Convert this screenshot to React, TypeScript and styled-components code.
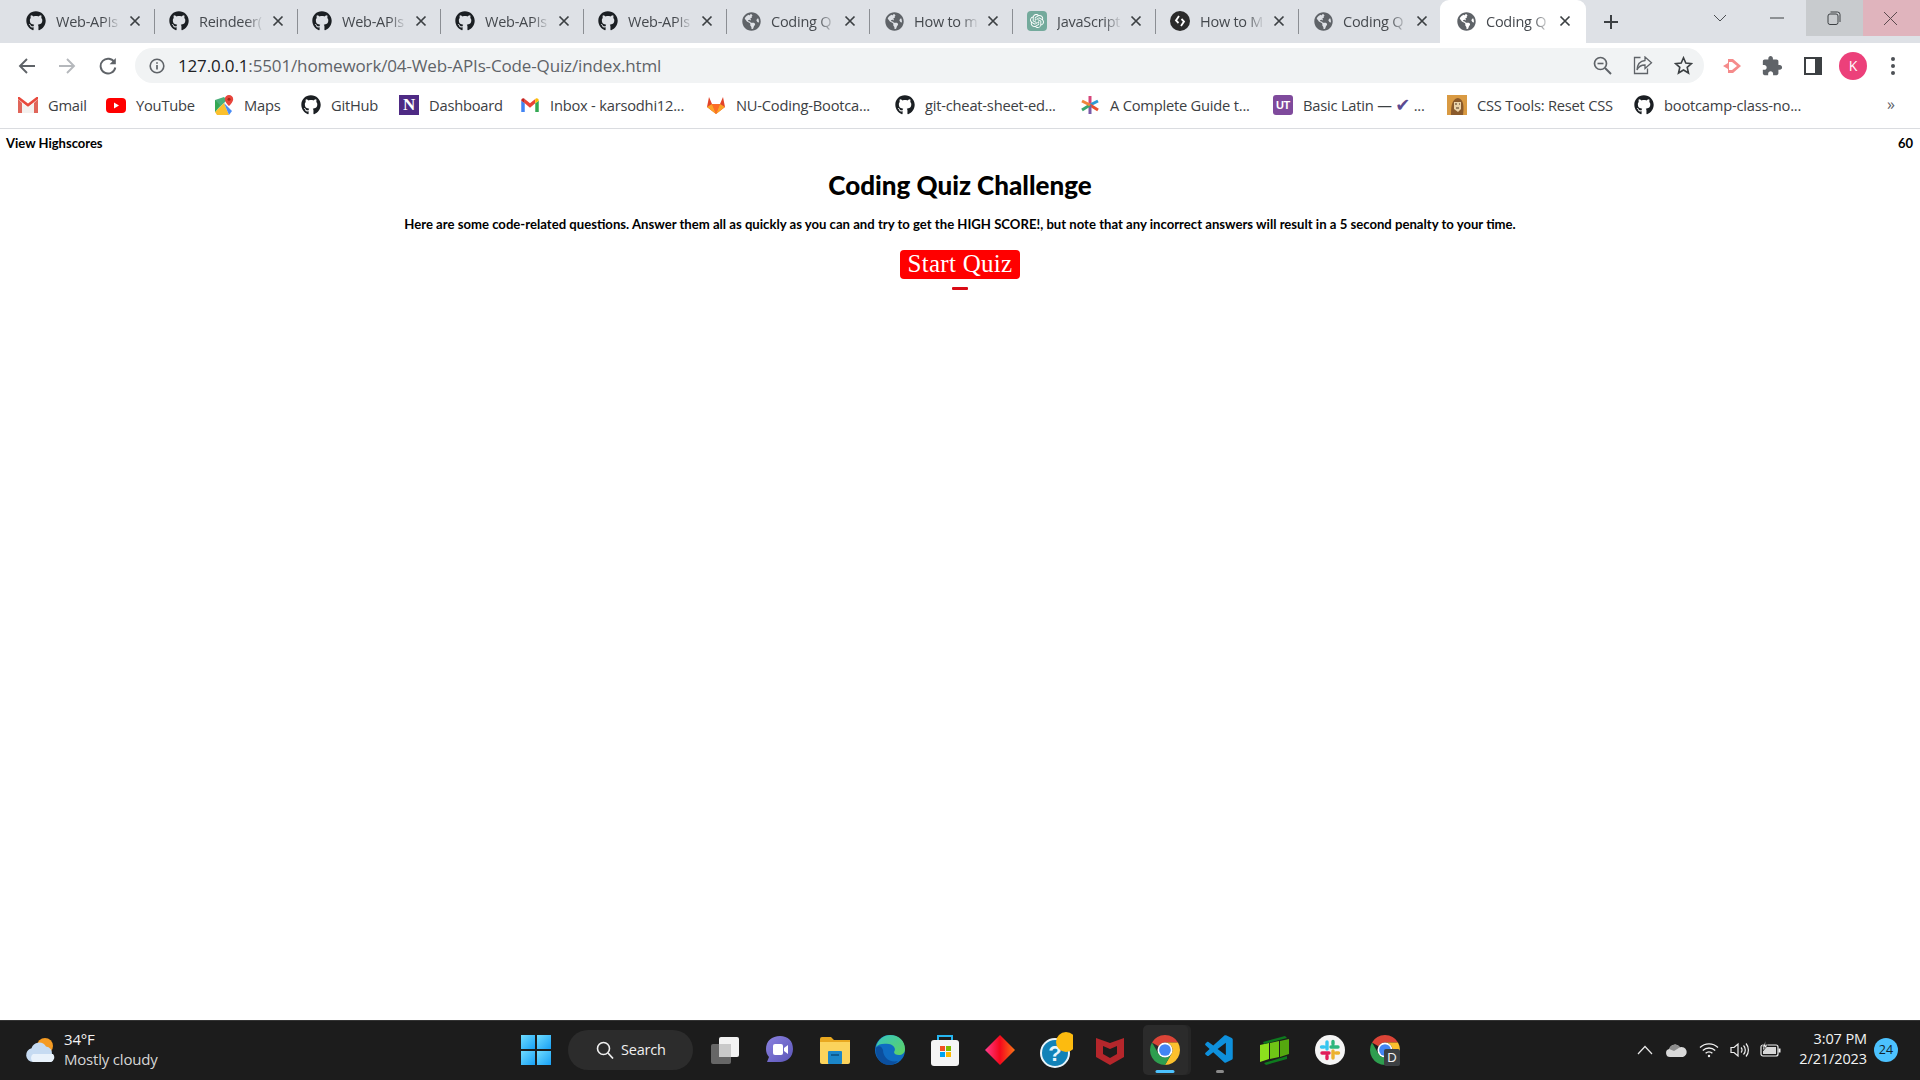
import React from "react";
import styled, { createGlobalStyle } from "styled-components";
import { FaGithub, FaGlobeAmericas } from "react-icons/fa";
import { SiOpenai } from "react-icons/si";
import { VscVscode } from "react-icons/vsc";

const UI = `"Open Sans", "Noto Sans", "Liberation Sans", sans-serif`;
const GOTHIC = `Lato, "Liberation Sans", sans-serif`;

const Global = createGlobalStyle`
  html, body { margin: 0; padding: 0; height: 100%; overflow: hidden; background: #fff; }
  #root { height: 100%; }
`;

const Shell = styled.div`
  width: 1920px; height: 1080px; display: flex; flex-direction: column; font-family: ${UI};
`;

/* ---------- tab strip ---------- */
const TabStrip = styled.div`
  height: 43px; flex: none; background: #dee1e6; display: flex; padding-left: 12px; box-sizing: border-box;
`;
const TabBox = styled.div<{ $active?: boolean; $sep?: boolean }>`
  width: 143px; height: 43px; flex: none; position: relative; display: flex; align-items: center;
  padding: 0 0 1px 14px; box-sizing: border-box; color: #45494e; z-index: ${p => (p.$active ? 1 : 0)};
  &::before {
    content: ""; position: absolute; left: -2px; right: -1px; top: 0; bottom: 0;
    background: ${p => (p.$active ? "#fff" : "transparent")}; border-radius: 9px 9px 0 0; z-index: -1;
  }
  &::after {
    content: ""; position: absolute; right: 0; top: 9px; height: 25px; width: 1px;
    background: ${p => (p.$sep ? "#8b8e93" : "transparent")};
  }
`;
const Favicon = styled.span`
  width: 20px; height: 20px; flex: none; display: flex; align-items: center; justify-content: center;
`;
const TabTitle = styled.span`
  margin-left: 10px; width: 65px; flex: none; overflow: hidden; white-space: nowrap; font-size: 14.5px;
  letter-spacing: -0.25px; -webkit-mask-image: linear-gradient(to right, #000 72%, transparent 100%);
  mask-image: linear-gradient(to right, #000 72%, transparent 100%);
`;
const TabClose = styled.span`
  margin-left: 7px; width: 14px; height: 14px; flex: none; display: flex;
`;
const NewTab = styled.div`
  width: 52px; height: 43px; flex: none; display: flex; align-items: center; justify-content: center;
`;
const WindowControls = styled.div`
  margin-left: auto; display: flex; align-items: flex-start;
`;
const WinButton = styled.div<{ $bg?: string }>`
  width: 57px; height: 36px; padding-right: 2px; box-sizing: border-box; display: flex; align-items: center; justify-content: center;
  background: ${p => p.$bg || "transparent"};
`;

/* ---------- toolbar ---------- */
const Toolbar = styled.div`
  height: 43px; flex: none; background: #fff; display: flex; align-items: flex-start; padding: 5px 8px 0 7px; box-sizing: border-box;
`;
const ToolSlot = styled.div`
  width: 40.3px; height: 35px; flex: none; display: flex; align-items: center; justify-content: center;
`;
const Omnibox = styled.div`
  width: 1569px; height: 35px; margin-left: 7px; margin-right: 8px; flex: none; background: #f1f3f4; border-radius: 18px;
  display: flex; align-items: center; padding: 0 0.5px 0 10px; box-sizing: border-box;
`;
const InfoSlot = styled.div`
  width: 24px; height: 24px; flex: none; display: flex; align-items: center; justify-content: center;
`;
const UrlText = styled.div`
  margin-left: 9px; font-size: 17px; letter-spacing: -0.14px; color: #5f6368; white-space: nowrap; flex: 1;
  b { font-weight: 400; color: #202124; }
`;
const Avatar = styled.div`
  width: 28px; height: 28px; border-radius: 50%; background: #ec407a; color: #fff; font-size: 14px;
  display: flex; align-items: center; justify-content: center;
`;

/* ---------- bookmarks ---------- */
const BookmarkBar = styled.div`
  height: 43px; flex: none; background: #fff; border-bottom: 1px solid #dadce0; box-sizing: border-box;
  display: flex; align-items: center; padding: 0 0 4px 18px; position: relative;
`;
const Bookmark = styled.div<{ $w: number }>`
  width: ${p => p.$w}px; flex: none; display: flex; align-items: center; gap: 10px;
  font-size: 14.7px; letter-spacing: -0.22px; color: #3c4043; white-space: nowrap;
`;
const BmIcon = styled.span`
  width: 20px; height: 20px; flex: none; display: flex; align-items: center; justify-content: center;
`;
const Check = styled.span`
  color: #5b4a91; font-family: "DejaVu Sans", sans-serif; font-size: 18px; line-height: 16px;
`;
const More = styled.div`
  margin-left: auto; margin-right: 25px; font-size: 16px; color: #5f6368; line-height: 1; padding-bottom: 3px;
`;
const NBadge = styled.span`
  width: 20px; height: 20px; background: #4e2a84; color: #fff; font: 700 17px "Liberation Serif", serif;
  display: flex; align-items: center; justify-content: center;
`;
const UTBadge = styled.span`
  width: 20px; height: 20px; border-radius: 3px; background: #7f4a9c; color: #fff; font: 700 11px "Liberation Sans", sans-serif;
  display: flex; align-items: center; justify-content: center;
`;

/* ---------- page ---------- */
const Page = styled.main`
  flex: 1; background: #fff; font-family: ${GOTHIC}; color: #000; min-height: 0;
`;
const TopRow = styled.header`
  display: flex; justify-content: space-between; padding: 6px 7px 0 6px; font-size: 13px; font-weight: 700; line-height: 16px;
`;
const Intro = styled.section`
  display: flex; flex-direction: column; align-items: center;
`;
const Title = styled.h1`
  margin: 16px 0 0; font-size: 26px; line-height: 36px; font-weight: 900; letter-spacing: 0;
`;
const Lead = styled.p`
  margin: 12px 0 0; font-size: 13.14px; line-height: 18px; font-weight: 700; letter-spacing: 0;
`;
const StartButton = styled.button`
  margin-top: 17px; width: 120px; height: 29px; padding: 0 0 2px; border: 0; border-radius: 4px; background: #f00; color: #fff;
  font: 400 25px/27px "Liberation Serif", serif; letter-spacing: 0.3px;
`;
const Dash = styled.div`
  margin-top: 8px; width: 16px; height: 3px; border-radius: 1px; background: #d90a14;
`;

/* ---------- taskbar ---------- */
const Taskbar = styled.footer`
  height: 60px; flex: none; background: #1c1c1c; border-top: 1px solid #333; box-sizing: border-box;
  display: flex; align-items: center; color: #fff; padding-bottom: 2px;
`;
const Weather = styled.div`
  width: 521px; flex: none; display: flex; align-items: center; padding-left: 25px; box-sizing: border-box; gap: 7px;
`;
const WeatherText = styled.div`
  font-size: 15px; line-height: 20px; letter-spacing: -0.2px; color: #f3f3f3; padding-bottom: 2px;
  span { display: block; color: #d6d6d6; }
`;
const StartIcon = styled.div`
  width: 30px; height: 30px; flex: none; display: grid; grid-template-columns: 1fr 1fr; gap: 2px;
`;
const Pane = styled.span`
  background: linear-gradient(135deg, #6fdcff, #18a0f5);
`;
const SearchPill = styled.div`
  width: 125px; height: 40px; margin-left: 17px; flex: none; border-radius: 20px; background: #2c2c2c;
  display: flex; align-items: center; padding-left: 28px; box-sizing: border-box; gap: 7px; font-size: 14.5px; color: #f0f0f0; letter-spacing: -0.2px;
`;
const TaskIcons = styled.div`
  display: flex; margin-left: 4.5px;
`;
const TaskSlot = styled.div<{ $active?: boolean }>`
  width: 55px; height: 50px; flex: none; display: flex; align-items: center; justify-content: center; position: relative;
  &::before {
    content: ""; position: absolute; left: 5px; right: 5px; top: 0; bottom: 0; border-radius: 5px;
    background: ${p => (p.$active ? "#2b2b2b" : "transparent")};
    box-shadow: ${p => (p.$active ? "3px 0 0 #262626" : "none")};
  }
  svg { position: relative; }
`;
const Indicator = styled.span<{ $wide?: boolean }>`
  position: absolute; bottom: 2px; left: 50%; transform: translateX(-50%); height: 3px; border-radius: 2px;
  width: ${p => (p.$wide ? 19 : 8)}px; background: ${p => (p.$wide ? "#4cc2ff" : "#8a8a8a")};
`;
const Tray = styled.div`
  margin-left: auto; display: flex; align-items: center; padding-right: 22px;
`;
const TraySlot = styled.div<{ $w: number }>`
  width: ${p => p.$w}px; height: 30px; display: flex; align-items: center; justify-content: center;
`;
const Clock = styled.div`
  width: 82px; text-align: right; font-size: 14.5px; line-height: 20px; color: #f3f3f3; letter-spacing: -0.1px; padding-bottom: 2px;
`;
const Badge = styled.div`
  width: 24px; height: 24px; margin-left: 7px; border-radius: 50%; background: #4cc2ff; color: #10222c; font-size: 12.5px;
  display: flex; align-items: center; justify-content: center;
`;

/* ---------- drawn icons ---------- */
const Close = () => (
  <svg width="14" height="14" viewBox="0 0 14 14"><path d="M2.5 2.5l9 9M11.5 2.5l-9 9" stroke="#3c4043" strokeWidth="1.7" /></svg>
);
const Globe = () => <FaGlobeAmericas size={19} color="#5f6368" />;
const Hub = ({ s = 20 }: { s?: number }) => <FaGithub size={s} color="#1b1f23" />;
const ChatGpt = () => (
  <svg width="20" height="20" viewBox="0 0 20 20"><rect width="20" height="20" rx="4" fill="#74aa9c" /><g transform="translate(3 3) scale(.583)"><SiOpenai size={24} color="#fff" /></g></svg>
);
const Sitepoint = () => (
  <svg width="20" height="20" viewBox="0 0 20 20"><circle cx="10" cy="10" r="10" fill="#2b2b2b" /><path d="M9 5L6 9.5l2.5 2.5M11 15l3-4.5L11.5 8" fill="none" stroke="#fff" strokeWidth="1.8" /></svg>
);
const GmailFlat = () => (
  <svg width="20" height="16" viewBox="0 0 20 16"><path d="M0 2v14h4V6z" fill="#e0665a" /><path d="M20 2v14h-4V6z" fill="#e0665a" /><path d="M0 2V0h1.5L10 6.5 18.5 0H20v2l-10 8z" fill="#e8493c" /><path d="M4 6l6 4 6-4v10H4z" fill="#f3f1ef" /></svg>
);
const GmailColor = () => (
  <svg width="18" height="14" viewBox="0 0 20 16"><path d="M0 3v13h4V6z" fill="#4285f4" /><path d="M20 3v13h-4V6z" fill="#34a853" /><path d="M4 6V1L10 6 16 1v5l-6 5z" fill="#ea4335" /><path d="M0 3c0-3 3-3.500 4-2v5z" fill="#c5221f" /><path d="M20 3c0-3-3-3.500-4-2v5z" fill="#fbbc04" /></svg>
);
const YouTube = () => (
  <svg width="20" height="15" viewBox="0 0 20 15"><rect width="20" height="15" rx="4" fill="#f00" /><path d="M8 4.500v6l5-3z" fill="#fff" /></svg>
);
const Maps = () => (
  <svg width="20" height="20" viewBox="0 0 20 20"><path d="M1 5l9-3 3 3-12 12z" fill="#4caf7a" /><path d="M1 17L10 8l5 12H3z" fill="#fbc02d" /><path d="M10 8l8 8-3 4z" fill="#4a8df6" /><path d="M1 5l5 5-5 7z" fill="#34a853" /><path d="M15 0a4.200 4.200 0 0 0-4.200 4.200C10.800 7 15 11 15 11s4.200-4 4.200-6.800A4.200 4.200 0 0 0 15 0z" fill="#e8453c" /><circle cx="15" cy="4.200" r="1.500" fill="#a52714" /></svg>
);
const GitLab = () => (
  <svg width="20" height="20" viewBox="0 0 20 20"><path d="M10 19L1 12 3 2l3 7h8l3-7 2 10z" fill="#e24329" /><path d="M10 19L6 9h8z" fill="#fc6d26" /><path d="M1 12l9 7-4-10z" fill="#fca326" /><path d="M19 12l-9 7 4-10z" fill="#fca326" /></svg>
);
const Star = () => (
  <svg width="20" height="20" viewBox="0 0 20 20" strokeWidth="3" strokeLinecap="butt"><path d="M10 1v9" stroke="#d6457a" /><path d="M10 10l8-4" stroke="#2b9bd6" /><path d="M10 10l8 5" stroke="#e8502f" /><path d="M10 10v9" stroke="#7a5ba8" /><path d="M10 10l-8 5" stroke="#3aa66d" /><path d="M10 10L2 6" stroke="#f0853a" /></svg>
);
const Portrait = () => (
  <svg width="20" height="20" viewBox="0 0 20 20"><rect width="20" height="20" fill="#d99a42" /><path d="M4 20c0-10 1-16 7-17 6 1 6 9 5 17z" fill="#8a5a2b" /><path d="M7 7h7v7l-3 3-4-3z" fill="#e9d2a9" /><path d="M8 9h2M12 9h1M9 13h3" stroke="#4b3320" strokeWidth="1" /></svg>
);
const Back = ({ c = "#5f6368" }: { c?: string }) => (
  <svg width="18" height="18" viewBox="0 0 18 18"><path d="M17 9H2.500M9 2L2 9l7 7" fill="none" stroke={c} strokeWidth="1.900" /></svg>
);
const Forward = () => (
  <svg width="18" height="18" viewBox="0 0 18 18"><path d="M1 9h14.500M9 2l7 7-7 7" fill="none" stroke="#b5b8bc" strokeWidth="1.900" /></svg>
);
const Reload = () => (
  <svg width="18" height="18" viewBox="0 0 18 18"><path d="M15.500 5.500A7.400 7.400 0 1 0 16.300 10.500" fill="none" stroke="#5f6368" strokeWidth="1.900" /><path d="M16.800 1v6.200h-6.200z" fill="#5f6368" /></svg>
);
const Info = () => (
  <svg width="16" height="16" viewBox="0 0 16 16"><circle cx="8" cy="8" r="6.800" fill="none" stroke="#5f6368" strokeWidth="1.600" /><path d="M8 7v4.500M8 4.200v1.600" stroke="#5f6368" strokeWidth="1.700" /></svg>
);
const ZoomOut = () => (
  <svg width="19" height="19" viewBox="0 0 19 19"><circle cx="7.500" cy="7.500" r="6" fill="none" stroke="#5f6368" strokeWidth="1.700" /><path d="M12 12l6 6" stroke="#5f6368" strokeWidth="1.900" /><path d="M4.500 7.500h6" stroke="#5f6368" strokeWidth="1.600" /></svg>
);
const Share = () => (
  <svg width="20" height="19" viewBox="0 0 20 19" fill="none" stroke="#5f6368" strokeWidth="1.300"><path d="M7.500 1.500H1.500v16h13v-5" /><path d="M12 1l6.500 5.800L12 12.500V9C8 9 5.500 10.500 4 14c.300-5.500 3.500-9 8-9.500z" /></svg>
);
const StarOutline = () => (
  <svg width="19" height="19" viewBox="0 0 19 19"><path d="M9.500 1.800l2.300 5.300 5.700.5-4.300 3.800 1.300 5.600-5-3-5 3 1.300-5.600-4.300-3.800 5.700-.5z" fill="none" stroke="#3c4043" strokeWidth="1.600" /></svg>
);
const Screencast = () => (
  <svg width="20" height="20" viewBox="0 0 20 20"><path d="M1 10l5-3V3h5l8 7-8 7H6v-4z" fill="#f58b8b" /><path d="M7 6h3l5 4-5 4H7z" fill="#fff" /></svg>
);
const Puzzle = () => (
  <svg width="22" height="22" viewBox="0 0 24 24" fill="#5f6368"><path d="M20.500 11H19V7c0-1.100-.9-2-2-2h-4V3.500C13 2.120 11.880 1 10.500 1S8 2.120 8 3.500V5H4c-1.100 0-1.990.9-1.990 2v3.800H3.500c1.490 0 2.700 1.210 2.700 2.700s-1.210 2.700-2.700 2.700H2V20c0 1.100.9 2 2 2h3.800v-1.500c0-1.490 1.210-2.700 2.700-2.700 1.490 0 2.700 1.210 2.700 2.700V22H17c1.100 0 2-.9 2-2v-4h1.500c1.380 0 2.500-1.120 2.500-2.500S21.880 11 20.500 11z" /></svg>
);
const SidePanel = () => (
  <svg width="18" height="18" viewBox="0 0 18 18"><rect x="1" y="1" width="16" height="16" fill="none" stroke="#3c4043" strokeWidth="2" /><rect x="11" y="1" width="6" height="16" fill="#3c4043" /></svg>
);
const Kebab = () => (
  <svg width="6" height="20" viewBox="0 0 6 20" fill="#4d5156"><circle cx="3" cy="3" r="2" /><circle cx="3" cy="10" r="2" /><circle cx="3" cy="17" r="2" /></svg>
);
const Plus = () => (
  <svg width="16" height="16" viewBox="0 0 16 16"><path d="M8 1v14M1 8h14" stroke="#3c4043" strokeWidth="2" /></svg>
);
const Chevron = () => (
  <svg width="14" height="10" viewBox="0 0 14 10"><path d="M1 2l6 6 6-6" fill="none" stroke="#4a4d51" strokeWidth="1" /></svg>
);
const Minimize = () => (
  <svg width="14" height="4" viewBox="0 0 14 4"><path d="M0 2h14" stroke="#3c4043" strokeWidth="1" /></svg>
);
const Restore = () => (
  <svg width="14" height="14" viewBox="0 0 14 14" fill="none" stroke="#3c4043" strokeWidth="1"><rect x="1" y="3" width="10" height="10.500" rx="2" /><path d="M3.500 1h7a2.500 2.500 0 0 1 2.500 2.500V11" /></svg>
);
const WinClose = () => (
  <svg width="15" height="15" viewBox="0 0 15 15"><path d="M1 1l13 13M14 1L1 14" stroke="#5b4a4e" strokeWidth="1" /></svg>
);
const WeatherIcon = () => (
  <svg width="32" height="26" viewBox="0 0 32 26"><circle cx="20" cy="9" r="8" fill="#f59b23" /><path d="M8 25a7 7 0 0 1-1.500-13.800A8 8 0 0 1 21 9.500a6.500 6.500 0 0 1 6 7.500 5 5 0 0 1-1 8z" fill="#c6dbf2" /><path d="M8 25a5 5 0 0 1 0-8h20a5 5 0 0 1-2 8z" fill="#e9f2fb" /></svg>
);
const Magnifier = () => (
  <svg width="18" height="18" viewBox="0 0 18 18"><circle cx="7.500" cy="7.500" r="6" fill="none" stroke="#f0f0f0" strokeWidth="1.600" /><path d="M12 12l5 5.500" stroke="#f0f0f0" strokeWidth="1.700" /></svg>
);
const TaskView = () => (
  <svg width="30" height="28" viewBox="0 0 30 28"><rect x="9" y="1" width="20" height="20" rx="2" fill="#f2f2f2" /><rect x="1" y="8" width="20" height="20" rx="2" fill="#666" /><rect x="9" y="8" width="12" height="13" fill="#c9c9c9" /></svg>
);
const TeamsChat = () => (
  <svg width="30" height="30" viewBox="0 0 30 30"><defs><linearGradient id="tc" x1="0" y1="0" x2="1" y2="1"><stop offset="0" stopColor="#8b82e0" /><stop offset="1" stopColor="#5b55b8" /></linearGradient></defs><path d="M15 1c8 0 13 5 13 13s-6 13-13 13H2l2-5c-2-2-3-5-3-8C1 6 7 1 15 1z" fill="url(#tc)" /><rect x="8" y="9" width="10" height="11" rx="2" fill="#fff" /><path d="M19 13l4-3v9l-4-3z" fill="#fff" /></svg>
);
const Folder = () => (
  <svg width="30" height="28" viewBox="0 0 30 28"><path d="M0 3a2 2 0 0 1 2-2h9l3 3h16v4H0z" fill="#e9a820" /><path d="M0 6h30v20a2 2 0 0 1-2 2H2a2 2 0 0 1-2-2z" fill="#fbd35c" /><rect x="8" y="15" width="14" height="13" rx="1" fill="#1b86c9" /><rect x="11" y="18" width="8" height="2" fill="#0d5c92" /></svg>
);
const Edge = () => (
  <svg width="30" height="30" viewBox="0 0 30 30"><defs><linearGradient id="eg" x1="0" y1="0" x2="1" y2="1"><stop offset="0" stopColor="#36c6c0" /><stop offset="1" stopColor="#5fd25f" /></linearGradient></defs><circle cx="15" cy="15" r="15" fill="#0f6cc2" /><path d="M1 12C3 4 9 0 15 0c9 0 15 6 15 14 0 4-3 6-6 6-3 0-5-1-5-3 2-2 1-7-5-8C8 8 3 9 1 12z" fill="url(#eg)" /><path d="M8 15c0 7 6 13 15 11-3 3-6 4-9 4C6 30 0 23 1 13c2-2 5-3 7 2z" fill="#0b4f9e" /></svg>
);
const Store = () => (
  <svg width="28" height="32" viewBox="0 0 28 32"><path d="M7 6V2h14v4" fill="none" stroke="#26b6f0" strokeWidth="2" /><rect x="0" y="6" width="28" height="26" rx="3" fill="#f5f5f5" /><rect x="9" y="12" width="5" height="5" fill="#f25022" /><rect x="15" y="12" width="5" height="5" fill="#7fba00" /><rect x="9" y="18" width="5" height="5" fill="#00a4ef" /><rect x="15" y="18" width="5" height="5" fill="#ffb900" /></svg>
);
const Diamond = () => (
  <svg width="30" height="30" viewBox="0 0 30 30"><defs><linearGradient id="dm" x1="0" y1="0" x2="1" y2="0"><stop offset="0" stopColor="#ff3c8e" /><stop offset=".5" stopColor="#f5081c" /><stop offset="1" stopColor="#f97316" /></linearGradient></defs><path d="M15 0l15 15-15 15L0 15z" fill="url(#dm)" /></svg>
);
const Help = () => (
  <svg width="36" height="36" viewBox="-3 0 36 36"><circle cx="15" cy="21" r="14" fill="#1182b8" stroke="#e8f4fa" strokeWidth="2" /><text x="15" y="29" textAnchor="middle" fontSize="22" fontWeight="700" fontFamily="Liberation Sans" fill="#e8f4fa">?</text><circle cx="26" cy="10" r="10" fill="#fdbb0f" /></svg>
);
const McAfee = () => (
  <svg width="28" height="30" viewBox="0 0 28 30"><path d="M0 3l14 5 14-5v19l-14 8-14-8z" fill="#b5262b" /><path d="M7 11l7 3 7-3v8l-7 4-7-4z" fill="#1c1c1c" /></svg>
);
const Chrome = ({ s = 30 }: { s?: number }) => (
  <svg width={s} height={s} viewBox="4 4 40 40"><path d="M24 4A20 20 0 0 1 41.320 14H24A10 10 0 0 0 15.340 19L6.680 14A20 20 0 0 1 24 4Z" fill="#db4437" /><path d="M41.320 14A20 20 0 0 1 24 44L32.660 29A10 10 0 0 0 24 14Z" fill="#fbc02d" /><path d="M24 44A20 20 0 0 1 6.680 14L15.340 29A10 10 0 0 0 32.660 29Z" fill="#2e9e4f" /><circle cx="24" cy="24" r="10" fill="#fff" /><circle cx="24" cy="24" r="7.800" fill="#4285f4" /></svg>
);
const GreenBars = () => (
  <svg width="30" height="30" viewBox="0 0 30 30"><path d="M0 10l9-2v16l-9 3z" fill="#8ce01d" /><path d="M10 8l9-2v16l-9 2z" fill="#6fc516" /><path d="M20 6l9-2v15l-9 3z" fill="#55a80f" /><path d="M3 7l22-6 2 2-23 6zM4 28l23-7v3L6 30z" fill="#0e7a1e" /></svg>
);
const Slack = () => (
  <svg width="30" height="30" viewBox="0 0 30 30"><circle cx="15" cy="15" r="15" fill="#f5f5f5" /><g strokeWidth="3.400" strokeLinecap="round" fill="none"><path d="M12 7v7M6.500 12H9" stroke="#36c5f0" /><path d="M7 18h7M12 23.500V21" stroke="#e01e5a" /><path d="M18 23v-7M23.500 18H21" stroke="#ecb22e" /><path d="M23 12h-7M18 6.500V9" stroke="#2eb67d" /></g></svg>
);
const ChromeDev = () => (
  <svg width="30" height="32" viewBox="0 0 30 32"><g transform="translate(0 1)"><Chrome s={30} /></g><rect x="14" y="15" width="16" height="17" rx="2" fill="#3c4043" /><text x="22" y="28" textAnchor="middle" fontSize="13" fontFamily="Liberation Sans" fill="#f1f1f1">D</text></svg>
);
const Caret = () => (
  <svg width="16" height="10" viewBox="0 0 16 10"><path d="M1 9l7-7.500L15 9" fill="none" stroke="#e8e8e8" strokeWidth="1.200" /></svg>
);
const OneDrive = () => (
  <svg width="21" height="14" viewBox="0 0 21 14"><path d="M4 14a4 4 0 0 1-.8-7.900A6 6 0 0 1 14 4.200 4.800 4.800 0 0 1 17 14z" fill="#d9d9d9" /><path d="M3.200 6.100A6 6 0 0 1 14 4.200L8 8z" fill="#8e8e8e" /></svg>
);
const Wifi = () => (
  <svg width="20" height="16" viewBox="0 0 20 16" fill="none" stroke="#f0f0f0" strokeWidth="1.300"><path d="M1 5.500a13 13 0 0 1 18 0M3.800 8.500a9 9 0 0 1 12.400 0M6.600 11.300a5 5 0 0 1 6.800 0" /><circle cx="10" cy="14" r="1.200" fill="#f0f0f0" stroke="none" /></svg>
);
const Speaker = () => (
  <svg width="21" height="16" viewBox="0 0 21 16" fill="none" stroke="#f0f0f0" strokeWidth="1.200"><path d="M1 5.500h3l4-3.500v12l-4-3.500H1z" /><path d="M11 5.500a3.500 3.500 0 0 1 0 5M13.500 3.500a6.500 6.500 0 0 1 0 9M16 1.500a10 10 0 0 1 0 13" /></svg>
);
const Battery = () => (
  <svg width="21" height="17" viewBox="0 0 21 17"><rect x="1" y="4" width="17" height="11" rx="2" fill="none" stroke="#f0f0f0" strokeWidth="1.200" /><rect x="3" y="6" width="13" height="7" fill="#d8d8d8" /><rect x="18.500" y="7.500" width="2" height="4" fill="#f0f0f0" /><path d="M6 0L2 6h3L3 10l5-6H5z" fill="#f0f0f0" stroke="#1c1c1c" strokeWidth=".6" /></svg>
);

/* ---------- data ---------- */
type TabData = { title: string; icon: React.ReactNode };
const tabs: TabData[] = [
  { title: "Web-APIs", icon: <Hub /> },
  { title: "Reindeer(", icon: <Hub /> },
  { title: "Web-APIs", icon: <Hub /> },
  { title: "Web-APIs", icon: <Hub /> },
  { title: "Web-APIs", icon: <Hub /> },
  { title: "Coding Q", icon: <Globe /> },
  { title: "How to m", icon: <Globe /> },
  { title: "JavaScript", icon: <ChatGpt /> },
  { title: "How to M", icon: <Sitepoint /> },
  { title: "Coding Q", icon: <Globe /> },
  { title: "Coding Q", icon: <Globe /> },
];

const bookmarks: { w: number; icon: React.ReactNode; label: React.ReactNode }[] = [
  { w: 88, icon: <GmailFlat />, label: "Gmail" },
  { w: 108, icon: <YouTube />, label: "YouTube" },
  { w: 87, icon: <Maps />, label: "Maps" },
  { w: 98, icon: <Hub />, label: "GitHub" },
  { w: 121, icon: <NBadge>N</NBadge>, label: "Dashboard" },
  { w: 186, icon: <GmailColor />, label: "Inbox - karsodhi12..." },
  { w: 189, icon: <GitLab />, label: "NU-Coding-Bootca..." },
  { w: 185, icon: <Hub />, label: "git-cheat-sheet-ed..." },
  { w: 193, icon: <Star />, label: "A Complete Guide t..." },
  { w: 174, icon: <UTBadge>UT</UTBadge>, label: <>Basic Latin — <Check>✔</Check> ...</> },
  { w: 187, icon: <Portrait />, label: "CSS Tools: Reset CSS" },
  { w: 180, icon: <Hub />, label: "bootcamp-class-no..." },
];

const taskIcons: { node: React.ReactNode; active?: boolean; dot?: "wide" | "small" }[] = [
  { node: <TaskView /> },
  { node: <TeamsChat /> },
  { node: <Folder /> },
  { node: <Edge /> },
  { node: <Store /> },
  { node: <Diamond /> },
  { node: <Help /> },
  { node: <McAfee /> },
  { node: <Chrome />, active: true, dot: "wide" },
  { node: <VscVscode size={34} color="#0e90dc" />, dot: "small" },
  { node: <GreenBars /> },
  { node: <Slack /> },
  { node: <ChromeDev /> },
];

export default function App() {
  return (
    <Shell>
      <Global />
      <TabStrip>
        {tabs.map((t, i) => (
          <TabBox key={i} $active={i === 10} $sep={i < 9}>
            <Favicon>{t.icon}</Favicon>
            <TabTitle>{t.title}</TabTitle>
            <TabClose><Close /></TabClose>
          </TabBox>
        ))}
        <NewTab><Plus /></NewTab>
        <WindowControls>
          <WinButton><Chevron /></WinButton>
          <WinButton><Minimize /></WinButton>
          <WinButton $bg="#c8cbce"><Restore /></WinButton>
          <WinButton $bg="#e0b4bd"><WinClose /></WinButton>
        </WindowControls>
      </TabStrip>

      <Toolbar>
        <ToolSlot><Back /></ToolSlot>
        <ToolSlot><Forward /></ToolSlot>
        <ToolSlot><Reload /></ToolSlot>
        <Omnibox>
          <InfoSlot><Info /></InfoSlot>
          <UrlText><b>127.0.0.1</b>:5501/homework/04-Web-APIs-Code-Quiz/index.html</UrlText>
          <ToolSlot><ZoomOut /></ToolSlot>
          <ToolSlot><Share /></ToolSlot>
          <ToolSlot><StarOutline /></ToolSlot>
        </Omnibox>
        <ToolSlot><Screencast /></ToolSlot>
        <ToolSlot><Puzzle /></ToolSlot>
        <ToolSlot><SidePanel /></ToolSlot>
        <ToolSlot><Avatar>K</Avatar></ToolSlot>
        <ToolSlot><Kebab /></ToolSlot>
      </Toolbar>

      <BookmarkBar>
        {bookmarks.map((b, i) => (
          <Bookmark key={i} $w={b.w}>
            <BmIcon>{b.icon}</BmIcon>
            <span>{b.label}</span>
          </Bookmark>
        ))}
        <More>»</More>
      </BookmarkBar>

      <Page>
        <TopRow>
          <span>View Highscores</span>
          <span>60</span>
        </TopRow>
        <Intro>
          <Title>Coding Quiz Challenge</Title>
          <Lead>Here are some code-related questions. Answer them all as quickly as you can and try to get the HIGH SCORE!, but note that any incorrect answers will result in a 5 second penalty to your time.</Lead>
          <StartButton>Start Quiz</StartButton>
          <Dash />
        </Intro>
      </Page>

      <Taskbar>
        <Weather>
          <WeatherIcon />
          <WeatherText>34°F<span>Mostly cloudy</span></WeatherText>
        </Weather>
        <StartIcon><Pane /><Pane /><Pane /><Pane /></StartIcon>
        <SearchPill><Magnifier />Search</SearchPill>
        <TaskIcons>
          {taskIcons.map((t, i) => (
            <TaskSlot key={i} $active={t.active}>
              {t.node}
              {t.dot && <Indicator $wide={t.dot === "wide"} />}
            </TaskSlot>
          ))}
        </TaskIcons>
        <Tray>
          <TraySlot $w={30}><Caret /></TraySlot>
          <TraySlot $w={32}><OneDrive /></TraySlot>
          <TraySlot $w={33}><Wifi /></TraySlot>
          <TraySlot $w={30}><Speaker /></TraySlot>
          <TraySlot $w={30}><Battery /></TraySlot>
          <Clock>3:07 PM<br />2/21/2023</Clock>
          <Badge>24</Badge>
        </Tray>
      </Taskbar>
    </Shell>
  );
}
